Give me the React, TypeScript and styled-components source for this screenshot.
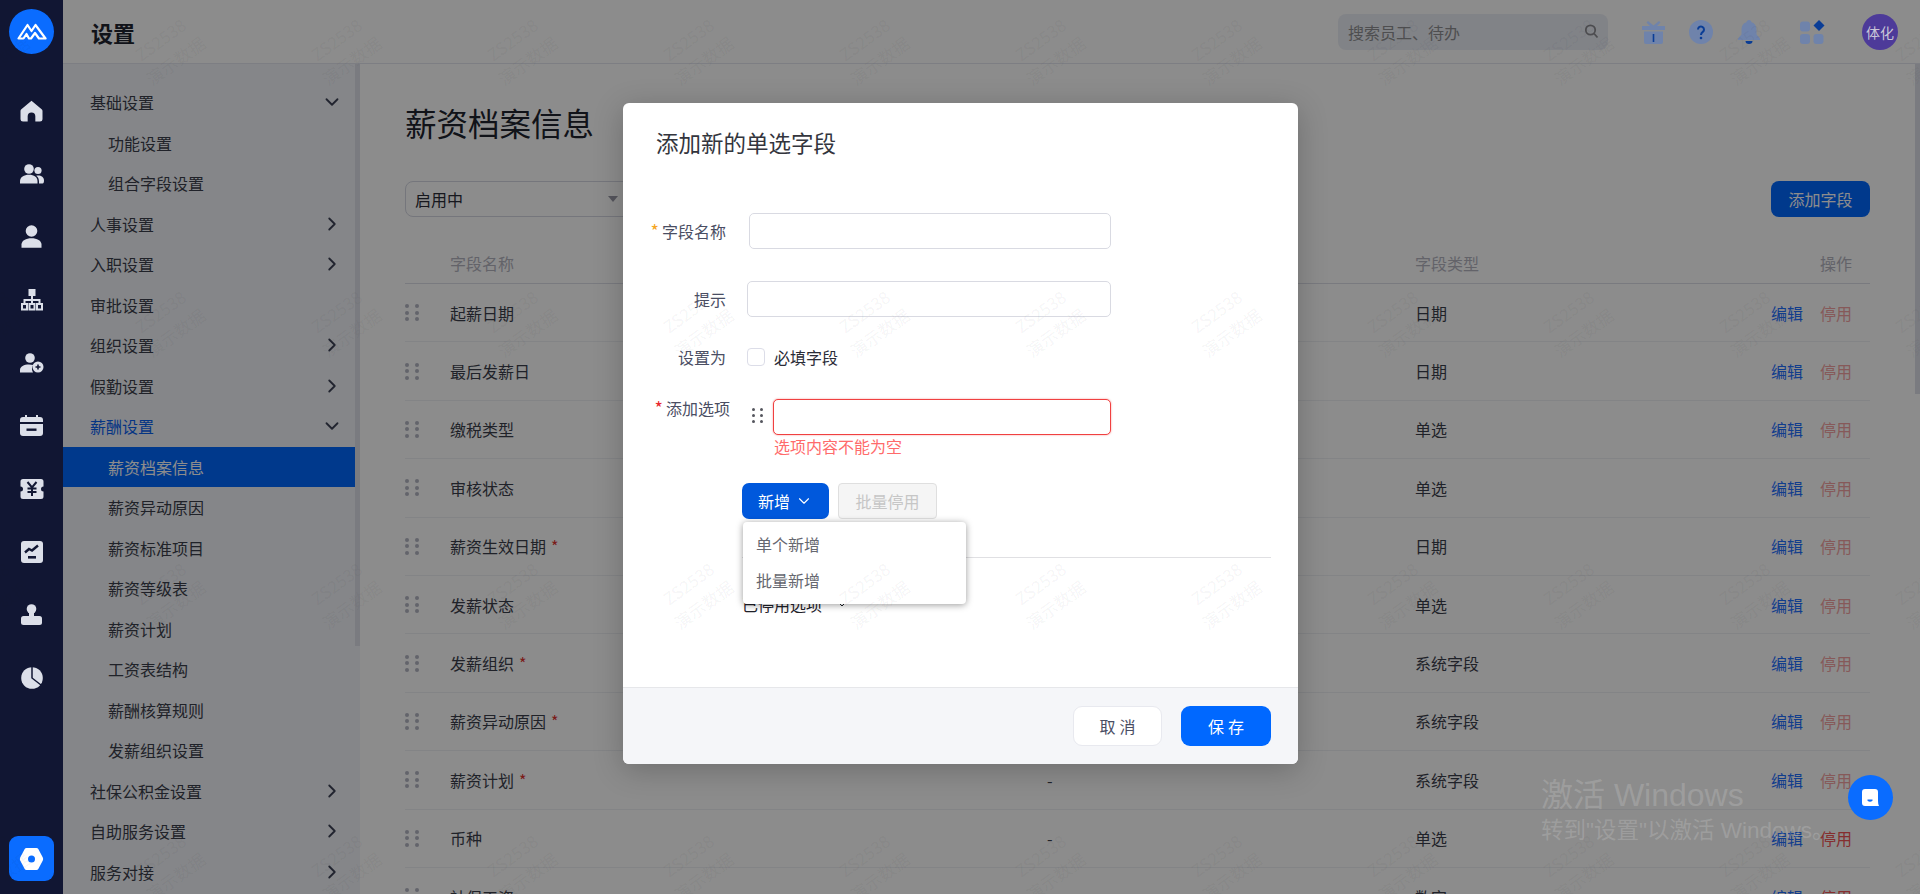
import React from 'react'
import styled, { createGlobalStyle } from 'styled-components'
import { ChevronDown, ChevronRight } from 'lucide-react'

const GlobalStyle = createGlobalStyle`
  html, body { margin: 0; padding: 0; }
  body { font-family: "Noto Sans CJK SC", "Liberation Sans", sans-serif; background: #fff; }
  * { box-sizing: border-box; }
`

const Page = styled.div`
  position: relative;
  display: flex;
  width: 1920px;
  height: 894px;
  overflow: hidden;
  background: #fff;
`

// rail sits above the mask in the reference, it is not dimmed
const Rail = styled.nav`
  position: relative;
  z-index: 11;
  flex: 0 0 63px;
  display: flex;
  flex-direction: column;
  align-items: center;
  padding-top: 9px;
  background: #111633;
`

const Logo = styled.div`
  width: 45px;
  height: 45px;
  border-radius: 50%;
  background: #0a6cff;
  display: flex;
  align-items: center;
  justify-content: center;
  margin-bottom: 25px;
`

const RailIcon = styled.div`
  width: 63px;
  height: 63px;
  flex: none;
  display: flex;
  align-items: center;
  justify-content: center;
  color: #dcdfe9;
`

const RailBottom = styled.div`
  margin-top: auto;
  margin-bottom: 13px;
  width: 45px;
  height: 45px;
  border-radius: 9px;
  background: #0a6cff;
  display: flex;
  align-items: center;
  justify-content: center;
`

const Main = styled.div`
  flex: 1;
  min-width: 0;
  display: flex;
  flex-direction: column;
`

const TopBar = styled.header`
  flex: 0 0 64px;
  display: flex;
  align-items: center;
  padding: 0 22px 0 28px;
  border-bottom: 1px solid #e4e6ee;
  background: #fff;
`

const PageTitle = styled.h1`
  margin: 0;
  font-size: 22px;
  font-weight: 700;
  color: #20232e;
  flex: 1;
`

const SearchBox = styled.div`
  width: 270px;
  height: 36px;
  border-radius: 8px;
  background: #eceff6;
  display: flex;
  align-items: center;
  justify-content: space-between;
  padding: 0 9px 0 10px;
  font-size: 16px;
  color: #8f8f92;
  margin-right: 34px;
`

const TopIcons = styled.div`
  position: relative;
  z-index: 11;
  display: flex;
  align-items: center;
`

const TopIcon = styled.div<{ $w: number }>`
  width: ${p => p.$w}px;
  display: flex;
  justify-content: flex-start;
`

const Avatar = styled.div`
  width: 36px;
  height: 36px;
  border-radius: 50%;
  background: #4d3a99;
  color: #c9c6d8;
  font-size: 14px;
  display: flex;
  align-items: center;
  justify-content: center;
`

const Body = styled.div`
  flex: 1;
  min-height: 0;
  display: flex;
`

const Sidebar = styled.aside`
  position: relative;
  flex: 0 0 297px;
  background: #f2f4f9;
  padding-top: 18px;
  overflow: hidden;
`

const ScrollThumb = styled.div<{ $h: number }>`
  position: absolute;
  right: 0;
  top: 0;
  width: 5px;
  height: ${p => p.$h}px;
  background: #dfe1e9;
`

const MenuRow = styled.div<{ $sub?: boolean; $active?: boolean; $open?: boolean }>`
  height: 40.5px;
  width: 292px;
  display: flex;
  align-items: center;
  justify-content: space-between;
  padding: 0 12px 0 ${p => (p.$sub ? 45 : 27)}px;
  font-size: 16px;
  color: ${p => (p.$active ? '#fff' : p.$open ? '#0a62f0' : '#3b3e4b')};
  background: ${p => (p.$active ? '#0068ff' : 'transparent')};
  svg { color: #3d4256; }
`

const Content = styled.main`
  position: relative;
  flex: 1;
  min-width: 0;
  padding: 36px 50px 0 45px;
  overflow: hidden;
  background: #fff;
`

const Heading = styled.h2`
  margin: 0;
  font-size: 31.5px;
  line-height: 44px;
  font-weight: 400;
  color: #20232e;
`

const Toolbar = styled.div`
  display: flex;
  justify-content: space-between;
  margin-top: 37px;
`

const SelectBox = styled.div`
  width: 228px;
  height: 36px;
  border: 1px solid #d5d7e2;
  border-radius: 8px;
  display: flex;
  align-items: center;
  justify-content: space-between;
  padding: 0 14px 0 9px;
  font-size: 16px;
  color: #2a2c38;
`

const Caret = styled.span`
  width: 0;
  height: 0;
  border-left: 5px solid transparent;
  border-right: 5px solid transparent;
  border-top: 6px solid #9a9aa8;
`

const PrimaryButton = styled.button`
  width: 99px;
  height: 36px;
  border: 0;
  border-radius: 8px;
  background: #0068ff;
  color: #fff;
  font: inherit;
  font-size: 16px;
`

const TableRow = styled.div<{ $head?: boolean }>`
  display: grid;
  grid-template-columns: 45px 597px 368px 1fr auto;
  align-items: center;
  height: ${p => (p.$head ? '67px' : '58.4px')};
  padding: ${p => (p.$head ? '26px 18px 0 0' : '0 18px 0 0')};
  border-bottom: 1px solid ${p => (p.$head ? '#dcdee8' : '#eef0f5')};
  font-size: 16px;
  color: ${p => (p.$head ? '#b4b4c0' : '#3b3e4b')};
`

const DragDots = styled.div`
  display: grid;
  grid-template-columns: 4px 4px;
  column-gap: 6px;
  row-gap: 2.5px;
  width: 14px;
  span {
    width: 4px;
    height: 4px;
    border-radius: 50%;
    background: #b5b6c4;
  }
`

const Star = styled.span`
  color: #e0322f;
  margin-left: 5px;
`

const Actions = styled.div`
  display: flex;
  gap: 17px;
`

const EditLink = styled.span`
  color: #1f6fff;
`

const StopLink = styled.span<{ $on?: boolean }>`
  color: ${p => (p.$on ? '#f25454' : '#f4a3a3')};
`

const Mask = styled.div`
  position: absolute;
  inset: 0;
  z-index: 10;
  background: rgba(0, 0, 0, 0.45);
`

const Modal = styled.section`
  position: absolute;
  z-index: 12;
  left: 623px;
  top: 103px;
  width: 675px;
  height: 661px;
  background: #fff;
  border-radius: 6px;
  box-shadow: 0 6px 30px rgba(0, 0, 0, 0.22);
  display: flex;
  flex-direction: column;
  overflow: hidden;
`

const ModalHead = styled.div`
  flex: 0 0 78px;
  display: flex;
  align-items: center;
  padding-left: 33px;
  font-size: 22.5px;
  color: #33353d;
`

const ModalForm = styled.div`
  flex: 1;
  padding-top: 32px;
`

const FormRow = styled.div<{ $top?: number; $start?: boolean }>`
  display: flex;
  align-items: ${p => (p.$start ? 'flex-start' : 'center')};
  margin-top: ${p => p.$top || 0}px;
`

const FieldLabel = styled.label<{ $w?: number }>`
  width: ${p => p.$w || 103}px;
  text-align: right;
  font-size: 16px;
  line-height: 18px;
  color: #4a4e63;
`

const Required = styled.span<{ $color: string }>`
  color: ${p => p.$color};
  font-size: 18px;
  line-height: 0;
  margin-right: 3px;
`

const TextInput = styled.div<{ $w: number; $gap?: number; $error?: boolean }>`
  width: ${p => p.$w}px;
  margin-left: ${p => p.$gap || 0}px;
  height: 36px;
  border: 1px solid ${p => (p.$error ? '#f04040' : '#d9dae2')};
  border-radius: 5px;
  box-shadow: ${p => (p.$error ? '0 0 2px rgba(240, 64, 64, 0.6)' : 'none')};
  background: #fff;
`

const CheckBox = styled.span`
  width: 18px;
  height: 18px;
  margin-left: 21px;
  border: 1px solid #dcdde8;
  border-radius: 4px;
`

const CheckText = styled.span`
  margin-left: 9px;
  font-size: 16px;
  line-height: 18px;
  color: #2a2c38;
`

const OptionHandle = styled.div`
  margin: 9px 10px 0 22px;
  width: 11px;
  display: grid;
  grid-template-columns: 3px 3px;
  column-gap: 5px;
  row-gap: 3px;
  span {
    width: 3px;
    height: 3px;
    border-radius: 50%;
    background: #55565e;
  }
`

const ErrorText = styled.div`
  margin-left: 151px;
  font-size: 16px;
  line-height: 22px;
  color: #ff6b6b;
`

const OptionActions = styled.div`
  position: relative;
  display: flex;
  gap: 9px;
  margin: 26px 0 0 119px;
`

const AddButton = styled.button`
  width: 87px;
  height: 36px;
  border: 0;
  border-radius: 7px;
  background: #0058dc;
  color: #fff;
  font: inherit;
  font-size: 16px;
  display: flex;
  align-items: center;
  justify-content: center;
  gap: 5px;
`

const DisabledButton = styled.button`
  width: 99px;
  height: 36px;
  border: 1px solid #dfdfdf;
  border-radius: 4px;
  background: #f5f5f5;
  color: #c6c6c6;
  font: inherit;
  font-size: 16px;
`

const Dropdown = styled.ul`
  position: absolute;
  z-index: 2;
  left: 1px;
  top: 39px;
  width: 223px;
  height: 82px;
  margin: 0;
  padding: 4px 0;
  list-style: none;
  background: #fff;
  border-radius: 4px;
  box-shadow: 0 1px 7px rgba(0, 0, 0, 0.4);
`

const DropdownItem = styled.li`
  height: 36px;
  line-height: 36px;
  padding-left: 13px;
  font-size: 16px;
  color: #666870;
`

const Divider = styled.div`
  height: 1px;
  margin: 38px 27px 0 119px;
  background: #e0e0e3;
`

const DisabledToggle = styled.div`
  display: flex;
  align-items: center;
  gap: 12px;
  margin: 36px 0 0 119px;
  font-size: 16px;
  line-height: 20px;
  color: #1f2129;
`

const ModalFoot = styled.footer`
  flex: 0 0 77px;
  display: flex;
  align-items: flex-start;
  justify-content: flex-end;
  gap: 19px;
  padding: 18px 27px 0 0;
  background: #f5f6f9;
  border-top: 1px solid #e6e7ea;
`

const FootButton = styled.button<{ $primary?: boolean }>`
  width: ${p => (p.$primary ? 90 : 89)}px;
  height: 40px;
  border: ${p => (p.$primary ? '0' : '1px solid #e8e9ef')};
  border-radius: 9px;
  background: ${p => (p.$primary ? '#0068ff' : '#fff')};
  color: ${p => (p.$primary ? '#fff' : '#4a4e63')};
  font: inherit;
  font-size: 16px;
  letter-spacing: 4px;
  text-indent: 4px;
`

const ChatButton = styled.div`
  position: absolute;
  z-index: 13;
  left: 1848px;
  top: 775px;
  width: 45px;
  height: 45px;
  border-radius: 50%;
  background: #0a6cff;
  display: flex;
  align-items: center;
  justify-content: center;
`

const ActivationNote = styled.div`
  position: absolute;
  z-index: 14;
  left: 1541px;
  top: 775px;
  font-family: "Liberation Sans", "Noto Sans CJK SC", sans-serif;
  color: rgba(255, 255, 255, 0.17);
  white-space: nowrap;
  pointer-events: none;
`

const ActivationTitle = styled.div`
  font-size: 32px;
  line-height: 40px;
`

const ActivationText = styled.div`
  font-size: 22.5px;
  line-height: 32px;
`

const WatermarkLayer = styled.div`
  position: absolute;
  z-index: 20;
  left: -96px;
  top: -86px;
  display: grid;
  grid-template-columns: repeat(13, 176px);
  grid-auto-rows: 272px;
  pointer-events: none;
`

const WatermarkTile = styled.div`
  display: flex;
  flex-direction: column;
  align-items: center;
  justify-content: center;
  transform: rotate(-36deg);
  color: rgba(30, 30, 40, 0.055);
  font-size: 17px;
  line-height: 26px;
  white-space: nowrap;
`

const menu = [
  { t: '基础设置', k: 'down' },
  { t: '功能设置', s: true },
  { t: '组合字段设置', s: true },
  { t: '人事设置', k: 'right' },
  { t: '入职设置', k: 'right' },
  { t: '审批设置' },
  { t: '组织设置', k: 'right' },
  { t: '假勤设置', k: 'right' },
  { t: '薪酬设置', k: 'down', open: true },
  { t: '薪资档案信息', s: true, active: true },
  { t: '薪资异动原因', s: true },
  { t: '薪资标准项目', s: true },
  { t: '薪资等级表', s: true },
  { t: '薪资计划', s: true },
  { t: '工资表结构', s: true },
  { t: '薪酬核算规则', s: true },
  { t: '发薪组织设置', s: true },
  { t: '社保公积金设置', k: 'right' },
  { t: '自助服务设置', k: 'right' },
  { t: '服务对接', k: 'right' },
]

const rows = [
  { n: '起薪日期', m: '', y: '日期' },
  { n: '最后发薪日', m: '', y: '日期' },
  { n: '缴税类型', m: '', y: '单选' },
  { n: '审核状态', m: '', y: '单选' },
  { n: '薪资生效日期', r: true, m: '', y: '日期' },
  { n: '发薪状态', m: '', y: '单选' },
  { n: '发薪组织', r: true, m: '', y: '系统字段' },
  { n: '薪资异动原因', r: true, m: '', y: '系统字段' },
  { n: '薪资计划', r: true, m: '-', y: '系统字段' },
  { n: '币种', m: '-', y: '单选', on: true },
  { n: '社保工资', m: '-', y: '数字', on: true },
]

const railIcons = [
  <svg key="home" width="23" height="22" viewBox="0 0 24 23" fill="currentColor"><path d="M12 .8 22.6 9.6q.9.8.9 2V20a2.6 2.6 0 0 1-2.6 2.6H16V17a4 4 0 0 0-8 0v5.6H3.1A2.6 2.6 0 0 1 .5 20v-8.4q0-1.2.9-2z" /></svg>,
  <svg key="team" width="24" height="20" viewBox="0 0 24 20" fill="currentColor"><circle cx="9" cy="5" r="4.8" /><path d="M0 19.500v-2C0 13 4 10.800 9 10.800s8.500 2.200 8.500 6.700v2z" /><circle cx="18" cy="6.500" r="3.600" /><path d="M19 19.500v-2c0-2.600-1-4.500-2.800-5.700 3.800-1 7.800.8 7.800 4.700 0 1.200-.2 3-1.500 3z" /></svg>,
  <svg key="user" width="21" height="23" viewBox="0 0 21 23" fill="currentColor"><circle cx="10.500" cy="6" r="5.800" /><path d="M.5 22.800v-3.300c0-4 4.500-6.300 10-6.300s10 2.300 10 6.300v3.300z" /></svg>,
  <svg key="org" width="22" height="22" viewBox="0 0 22 22" fill="none" stroke="currentColor" strokeWidth="2"><rect x="8.500" y="1" width="5" height="5" fill="currentColor" /><path d="M11 6v9M3.500 15v-4h15v4" /><rect x="1" y="15" width="5" height="5.500" /><rect x="8.500" y="15" width="5" height="5.500" /><rect x="16" y="15" width="5" height="5.500" /></svg>,
  <svg key="add" width="24" height="20" viewBox="0 0 24 20" fill="currentColor"><circle cx="10" cy="5" r="4.800" /><path d="M0 19.500v-2.500c0-3.500 4-5.500 9-5.500 1.500 0 3 .2 4.200.6a7 7 0 0 0-.2 7.400z" /><circle cx="18" cy="14" r="5.500" /><path d="M18 11.500v5M15.500 14h5" stroke="#111633" strokeWidth="1.600" /></svg>,
  <svg key="cal" width="23" height="21" viewBox="0 0 23 21" fill="currentColor"><path d="M5 0h2v2h9V0h2v2h2a3 3 0 0 1 3 3v2H0V5a3 3 0 0 1 3-3h2z" /><path d="M0 9h23v9a3 3 0 0 1-3 3H3a3 3 0 0 1-3-3z" /><rect x="6.500" y="13.500" width="10" height="2.400" fill="#111633" /></svg>,
  <svg key="yen" width="24" height="20" viewBox="0 0 24 20"><path fill="currentColor" d="M3 0h18a2.500 2.500 0 0 1 2.500 2.500V7.500a2.500 2.500 0 0 0 0 5v5A2.500 2.500 0 0 1 21 20H3a2.500 2.500 0 0 1-2.500-2.500v-5a2.500 2.500 0 0 0 0-5v-5A2.500 2.500 0 0 1 3 0z" /><path fill="none" stroke="#111633" strokeWidth="2" d="M7.500 3 12 8.500 16.500 3M12 8.500V17M7.500 9.500h9M7.500 13h9" /></svg>,
  <svg key="chart" width="22" height="22" viewBox="0 0 22 22"><rect width="22" height="22" rx="3" fill="currentColor" /><path fill="none" stroke="#111633" strokeWidth="2.400" d="M4 11.500 8 8l3 1.500L17 4.500" /><rect x="7" y="15" width="8" height="2.600" fill="#111633" /></svg>,
  <svg key="stamp" width="21" height="21" viewBox="0 0 21 21" fill="currentColor"><circle cx="10.500" cy="5" r="4.800" /><rect x="8" y="7" width="5" height="6" /><rect x="0" y="12" width="21" height="9" rx="2.500" /></svg>,
  <svg key="pie" width="22" height="22" viewBox="0 0 22 22"><circle cx="11" cy="11" r="10.800" fill="currentColor" /><path fill="none" stroke="#111633" strokeWidth="1.500" d="M11 0v11l9 7" /></svg>,
]

const App = () => {
  return (
    <Page>
      <GlobalStyle />
      <Rail>
        <Logo>
          <svg width="30" height="17" viewBox="0 0 30 17" fill="none" stroke="#fff" strokeWidth="2.200" strokeLinejoin="round">
            <path d="M1.500 15.500 10.500 2l4 6 4-6 10 13.500H22L18 10l-4 5.500h-2L9.500 11l-3 4.500z" />
          </svg>
        </Logo>
        {railIcons.map(icon => (
          <RailIcon key={icon.key}>{icon}</RailIcon>
        ))}
        <RailBottom>
          <svg width="25" height="24" viewBox="0 0 25 24">
            <path fill="#fff" d="M7.500 1h10q1.200 0 1.800 1l4.500 8.500q.8 1.500 0 3L19.300 22q-.6 1-1.800 1h-10q-1.200 0-1.800-1L1.200 13.500q-.8-1.500 0-3L5.700 2q.6-1 1.800-1z" />
            <circle cx="12.500" cy="12" r="3.500" fill="#0a6cff" />
          </svg>
        </RailBottom>
      </Rail>

      <Main>
        <TopBar>
          <PageTitle>设置</PageTitle>
          <SearchBox>
            搜索员工、待办
            <svg width="15" height="15" viewBox="0 0 15 15" fill="none" stroke="#8c8c92" strokeWidth="1.800"><circle cx="6.500" cy="6" r="4.700" /><path d="m10 9.500 3.500 4" /></svg>
          </SearchBox>
          <TopIcons>
            <TopIcon $w={47}>
              <svg width="23" height="24" viewBox="0 0 23 24">
                <path fill="#6f83ab" d="M6 1l5.500 4.500L17 1l1.500 1.500L15 6h8v4H0V6h8L4.500 2.500z" />
                <path fill="#6f83ab" d="M2 11.500h19V22a2 2 0 0 1-2 2H4a2 2 0 0 1-2-2z" />
                <rect x="10.700" y="14" width="1.600" height="8" fill="#0a3d96" />
              </svg>
            </TopIcon>
            <TopIcon $w={49}>
              <svg width="24" height="24" viewBox="0 0 24 24">
                <circle cx="12" cy="12" r="12" fill="#6f83ab" />
                <path fill="none" stroke="#0a3d96" strokeWidth="2" d="M9 9.500a3 3 0 1 1 4.800 2.400c-1.200.9-1.800 1.500-1.800 3" />
                <circle cx="12" cy="18" r="1.300" fill="#0a3d96" />
              </svg>
            </TopIcon>
            <TopIcon $w={62}>
              <svg width="22" height="24" viewBox="0 0 22 24">
                <path fill="#6f83ab" d="M11 0c1.500 0 2.300 1 2.500 2.200C17 3.200 18.500 6.200 18.500 10v4.500L22 18.500V20H0v-1.500l3.500-4V10c0-3.800 1.500-6.800 5-7.800C8.700 1 9.500 0 11 0z" />
                <path fill="#0a3d96" d="M7.500 21h7a3.500 3 0 0 1-7 0z" />
              </svg>
            </TopIcon>
            <TopIcon $w={62}>
              <svg width="25" height="24" viewBox="0 0 25 24">
                <rect x="0" y="1.500" width="10" height="10" rx="3" fill="#6f83ab" />
                <rect x="0" y="14" width="10" height="10" rx="3" fill="#6f83ab" />
                <rect x="13.500" y="14" width="10" height="10" rx="3" fill="#6f83ab" />
                <path fill="#0a3d96" d="M19 0l5.500 5.500L19 11l-5.500-5.500z" />
              </svg>
            </TopIcon>
            <Avatar>体化</Avatar>
          </TopIcons>
        </TopBar>

        <Body>
          <Sidebar>
            <ScrollThumb $h={582} />
            {menu.map(m => (
              <MenuRow key={m.t} $sub={m.s} $active={m.active} $open={m.open}>
                {m.t}
                {m.k === 'down' && <ChevronDown size={22} strokeWidth={2} />}
                {m.k === 'right' && <ChevronRight size={22} strokeWidth={2} />}
              </MenuRow>
            ))}
          </Sidebar>

          <Content>
            <ScrollThumb $h={330} />
            <Heading>薪资档案信息</Heading>
            <Toolbar>
              <SelectBox>
                启用中
                <Caret />
              </SelectBox>
              <PrimaryButton>添加字段</PrimaryButton>
            </Toolbar>
            <TableRow $head>
              <span />
              <span>字段名称</span>
              <span />
              <span>字段类型</span>
              <span>操作</span>
            </TableRow>
            {rows.map(r => (
              <TableRow key={r.n}>
                <DragDots>
                  {[0, 1, 2, 3, 4, 5].map(i => <span key={i} />)}
                </DragDots>
                <span>
                  {r.n}
                  {r.r && <Star>*</Star>}
                </span>
                <span>{r.m}</span>
                <span>{r.y}</span>
                <Actions>
                  <EditLink>编辑</EditLink>
                  <StopLink $on={r.on}>停用</StopLink>
                </Actions>
              </TableRow>
            ))}
          </Content>
        </Body>
      </Main>

      <Mask />

      <Modal>
        <ModalHead>添加新的单选字段</ModalHead>
        <ModalForm>
          <FormRow>
            <FieldLabel><Required $color="#f5a623">*</Required>字段名称</FieldLabel>
            <TextInput $w={362} $gap={23} />
          </FormRow>
          <FormRow $top={32}>
            <FieldLabel>提示</FieldLabel>
            <TextInput $w={364} $gap={21} />
          </FormRow>
          <FormRow $top={31}>
            <FieldLabel>设置为</FieldLabel>
            <CheckBox />
            <CheckText>必填字段</CheckText>
          </FormRow>
          <FormRow $top={33} $start>
            <FieldLabel $w={107}><Required $color="#e8262d">*</Required>添加选项</FieldLabel>
            <OptionHandle>
              {[0, 1, 2, 3, 4, 5].map(i => <span key={i} />)}
            </OptionHandle>
            <TextInput $w={338} $error />
          </FormRow>
          <ErrorText>选项内容不能为空</ErrorText>
          <OptionActions>
            <AddButton>
              新增
              <ChevronDown size={18} strokeWidth={1.5} />
            </AddButton>
            <DisabledButton>批量停用</DisabledButton>
            <Dropdown>
              <DropdownItem>单个新增</DropdownItem>
              <DropdownItem>批量新增</DropdownItem>
            </Dropdown>
          </OptionActions>
          <Divider />
          <DisabledToggle>
            已停用选项
            <ChevronDown size={16} strokeWidth={1.5} />
          </DisabledToggle>
        </ModalForm>
        <ModalFoot>
          <FootButton>取消</FootButton>
          <FootButton $primary>保存</FootButton>
        </ModalFoot>
      </Modal>

      <ActivationNote>
        <ActivationTitle>激活 Windows</ActivationTitle>
        <ActivationText>转到"设置"以激活 Windows。</ActivationText>
      </ActivationNote>

      <ChatButton>
        <svg width="17" height="17" viewBox="0 0 17 17">
          <path fill="#fff" d="M3 0h10a3 3 0 0 1 3 3v9q0 3 1 5H3a3 3 0 0 1-3-3V3a3 3 0 0 1 3-3z" />
          <path fill="#0a6cff" d="M5.500 10.500h5v1.200q-2.500 2-5 0z" />
        </svg>
      </ChatButton>

      <WatermarkLayer>
        {Array.from({ length: 52 }).map((_, i) => (
          <WatermarkTile key={i}>
            <span>ZS2538</span>
            <span>演示数据</span>
          </WatermarkTile>
        ))}
      </WatermarkLayer>
    </Page>
  )
}

export default App
